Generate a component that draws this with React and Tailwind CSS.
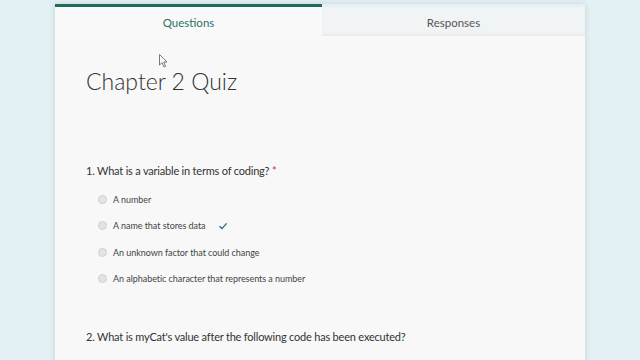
export default function App() {
  const options = [
    'A number',
    'A name that stores data',
    'An unknown factor that could change',
    'An alphabetic character that represents a number',
  ]

  return (
    <div className="w-[640px] h-[360px] overflow-hidden bg-[#e3f0f4] relative" style={{ fontFamily: 'Lato, "Noto Sans", sans-serif' }}>
      <div className="ml-[55px] mt-[4px] w-[530px] h-[400px] flex flex-col shadow-[0_0_6px_rgba(0,0,0,0.12)]">
        <div className="flex h-[32px]">
          <div className="w-[267px] bg-[#f9f9f9] border-t-[3px] border-[#1f6c5e] flex items-center justify-center pt-[2px] text-[11.5px] text-[#2a7366]">
            Questions
          </div>
          <div className="flex-1 mt-[3px] bg-[#f1f4f4] shadow-[inset_0_-3px_4px_-3px_rgba(0,0,0,0.08)] flex items-center justify-center pt-[2px] text-[11.5px] text-[#555]">
            Responses
          </div>
        </div>
        <div className="flex-1 bg-[#f8f8f8] pl-[31px]">
          <h1 className="mt-[29px] text-[23px] font-light text-[#333] leading-[32px]">
            Chapter 2 Quiz
          </h1>
          <div className="mt-[65px] text-[11px] tracking-[-0.2px] text-[#333] leading-[18px]">
            1. What is a variable in terms of coding? <span className="text-[#c4314b]">*</span>
          </div>
          <div className="mt-[6px] pl-[12px] flex flex-col">
            {options.map((o, i) => (
              <div key={o} className="h-[26.5px] flex items-center gap-[6px] text-[9px] tracking-[-0.05px] text-[#444]">
                <span className="w-[9px] h-[9px] rounded-full bg-[#e4e4e4] border border-[#cfcfcf]"></span>
                <span>{o}</span>
                {i === 1 && (
                  <svg width="10" height="10" viewBox="0 0 10 10" className="ml-[6px]">
                    <path d="M1.5 5.2 L4 7.6 L8.6 2.4" fill="none" stroke="#2a6f8a" strokeWidth="1.4" />
                  </svg>
                )}
              </div>
            ))}
          </div>
          <div className="mt-[36px] text-[11px] tracking-[-0.2px] text-[#333] leading-[18px]">
            2. What is myCat's value after the following code has been executed?
          </div>
        </div>
      </div>
      <svg className="absolute left-[159px] top-[54px]" width="10" height="15" viewBox="0 0 10 15">
        <path d="M0.5 0.5 L0.5 11 L3 8.6 L5 13 L6.6 12.3 L4.7 8 L8 8 Z" fill="#fff" stroke="#555" strokeWidth="0.8" />
      </svg>
    </div>
  )
}
